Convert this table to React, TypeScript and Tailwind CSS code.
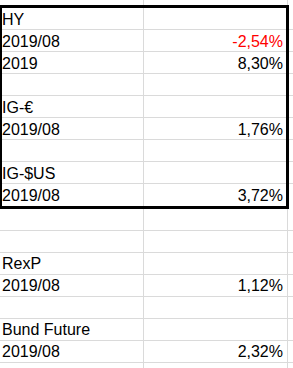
import React from 'react';

type Row = { label: string; value?: string; neg?: boolean };

// cells inside the thick-bordered block
const boxRows: Row[] = [
  { label: 'HY' },
  { label: '2019/08', value: '-2,54%', neg: true },
  { label: '2019', value: '8,30%' },
  { label: '' },
  { label: 'IG-€' },
  { label: '2019/08', value: '1,76%' },
  { label: '' },
  { label: 'IG-$US' },
  { label: '2019/08', value: '3,72%' },
];

// rows below the block
const restRows: Row[] = [
  { label: '' },
  { label: '' },
  { label: 'RexP' },
  { label: '2019/08', value: '1,12%' },
  { label: '' },
  { label: 'Bund Future' },
  { label: '2019/08', value: '2,32%' },
  { label: '' },
];

const grid = 'border-[#dadada]';

export default function App() {
  return (
    <main
      className="w-[293px] h-[368px] overflow-hidden bg-white text-black text-[16px]"
      style={{ fontFamily: '"Liberation Sans", Arial, sans-serif' }}
    >
      {/* sliver of the row above */}
      <div className="flex h-[5px]">
        <div className={`w-[144px] border-r ${grid}`} />
        <div className={`w-[144px] border-r ${grid}`} />
        <div className="flex-1" />
      </div>

      {/* thick box */}
      <div className="flex">
        <div className="ml-[-1px] w-[290px] border-[3px] border-black">
          {boxRows.map((r, i) => (
            <div
              key={i}
              className={`flex h-[22px] ${i < boxRows.length - 1 ? `border-b ${grid}` : 'h-[21px]'}`}
            >
              <div className={`w-[142px] border-r ${grid} pt-[2px] leading-[19px] whitespace-nowrap`}>
                {r.label}
              </div>
              <div
                className={`w-[142px] pt-[2px] pr-[3px] leading-[19px] text-right whitespace-nowrap ${
                  r.neg ? 'text-[#ff0000]' : ''
                }`}
              >
                {r.value}
              </div>
            </div>
          ))}
        </div>
        <div className="flex-1 pt-[3px]">
          {boxRows.map((_, i) => (
            <div key={i} className={`h-[22px] ${i < boxRows.length - 1 ? `border-b ${grid}` : ''}`} />
          ))}
        </div>
      </div>

      {/* remaining rows */}
      {restRows.map((r, i) => (
        <div key={i} className={`flex h-[22px] border-b ${grid}`}>
          <div className={`w-[144px] border-r ${grid} pl-[2px] pt-[1px] leading-[19px] whitespace-nowrap`}>
            {r.label}
          </div>
          <div className={`w-[144px] border-r ${grid} pr-[4px] pt-[1px] leading-[19px] text-right whitespace-nowrap`}>
            {r.value}
          </div>
          <div className="flex-1" />
        </div>
      ))}
    </main>
  );
}
